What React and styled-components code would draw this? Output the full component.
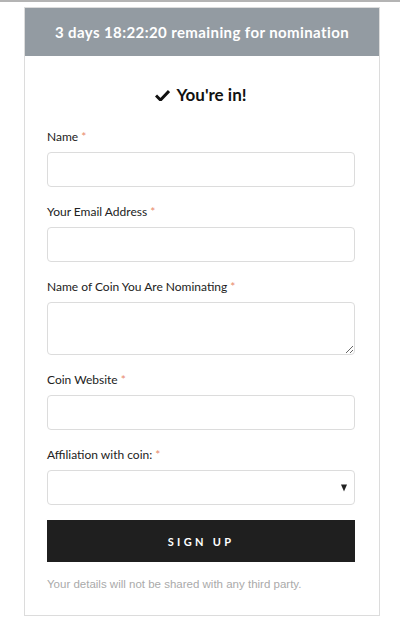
import React from "react";
import styled, { createGlobalStyle } from "styled-components";

const Global = createGlobalStyle`
  html, body { margin: 0; padding: 0; background: #fff; }
  body { border-top: 2px solid #b4b4b4; font-family: "Lato", "Noto Sans", sans-serif; }
  * { box-sizing: border-box; }
`;

const Page = styled.div`
  padding: 5px 20px 10px 24px;
`;

const Card = styled.div`
  width: 356px;
  border: 1px solid #dcdcdc;
  background: #fff;
`;

const Header = styled.div`
  height: 48px;
  background: #939ba2;
  color: #fff;
  font-weight: 700;
  font-size: 15px;
  display: flex;
  align-items: center;
  justify-content: center;
  letter-spacing: 0.4px;
`;

const Body = styled.div`
  padding: 28px 24px 25px 22px;
  display: flex;
  flex-direction: column;
`;

const Title = styled.h2`
  margin: 0 0 25px;
  font-size: 17px;
  font-weight: 700;
  color: #111;
  display: flex;
  align-items: center;
  justify-content: center;
  gap: 6px;
`;

const Field = styled.div`
  display: flex;
  flex-direction: column;
  margin-bottom: 18px;
`;

const Label = styled.label`
  font-size: 12px;
  color: #222;
  margin-bottom: 8px;
  line-height: 14px;
`;

const Req = styled.span`
  color: #e8896b;
  margin-left: 3px;
`;

const Input = styled.input`
  width: 308px;
  height: 35px;
  border: 1px solid #dcdcdc;
  border-radius: 4px;
  background: #fff;
  outline: none;
`;

const TextArea = styled.textarea`
  width: 308px;
  height: 53px;
  border: 1px solid #dcdcdc;
  border-radius: 4px;
  outline: none;
  resize: vertical;
  display: block;
`;

const SelectWrap = styled.div`
  position: relative;
  width: 308px;
  height: 35px;
  border: 1px solid #dcdcdc;
  border-radius: 4px;
`;

const Caret = styled.span`
  position: absolute;
  right: 7px;
  top: 50%;
  transform: translateY(-50%);
  width: 0;
  height: 0;
  border-left: 3.5px solid transparent;
  border-right: 3.5px solid transparent;
  border-top: 7px solid #222;
`;

const Button = styled.button`
  width: 308px;
  height: 42px;
  margin-top: -3px;
  background: #1f1f1f;
  color: #fff;
  border: none;
  font-family: "Lato", sans-serif;
  font-weight: 700;
  font-size: 11px;
  letter-spacing: 3.3px;
  text-transform: uppercase;
`;

const Note = styled.p`
  margin: 16px 0 0;
  font-family: "Liberation Sans", Arial, sans-serif;
  font-size: 11.5px;
  color: #aaaaaa;
`;

const Check = () => (
  <svg width="15" height="12" viewBox="0 0 15 12">
    <path d="M1 6.5 L5.5 11 L14 2" fill="none" stroke="#111" strokeWidth="3" strokeLinecap="butt" />
  </svg>
);

const F = ({ label, children }) => (
  <Field>
    <Label>
      {label}
      <Req>*</Req>
    </Label>
    {children}
  </Field>
);

export default function App() {
  return (
    <>
      <Global />
      <Page>
        <Card>
          <Header>3 days 18:22:20 remaining for nomination</Header>
          <Body>
            <Title>
              <Check />
              You're in!
            </Title>
            <F label="Name">
              <Input />
            </F>
            <F label="Your Email Address">
              <Input />
            </F>
            <F label="Name of Coin You Are Nominating">
              <TextArea />
            </F>
            <F label="Coin Website">
              <Input />
            </F>
            <F label="Affiliation with coin:">
              <SelectWrap>
                <Caret />
              </SelectWrap>
            </F>
            <Button>Sign up</Button>
            <Note>Your details will not be shared with any third party.</Note>
          </Body>
        </Card>
      </Page>
    </>
  );
}
